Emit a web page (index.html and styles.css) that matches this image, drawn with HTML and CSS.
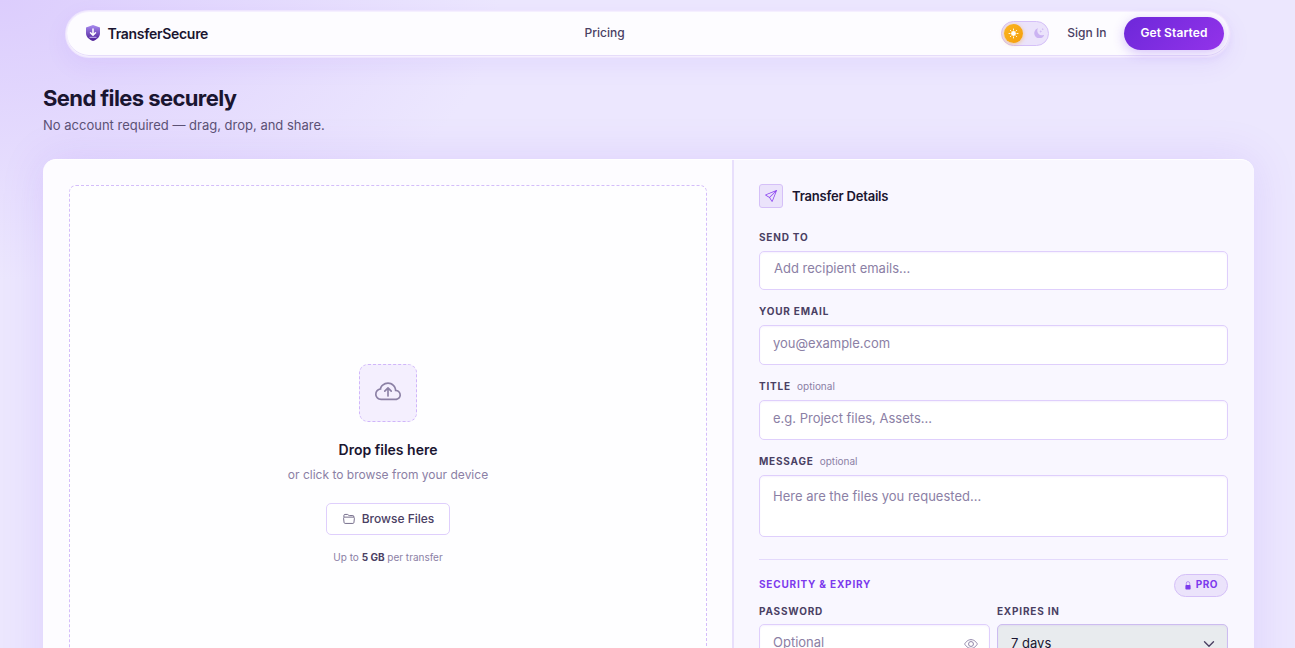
FILE: index.html
```html
<!DOCTYPE html>
<html lang="en">
<head>
<meta charset="utf-8">
<meta name="viewport" content="width=device-width, initial-scale=1">
<title>TransferSecure</title>
<link rel="stylesheet" href="styles.css">
</head>
<body>
<header class="nav">
  <a class="brand" href="#">
    <svg width="16" height="18" viewBox="0 0 16 18" aria-hidden="true">
      <defs><linearGradient id="shield" x1="0" y1="0" x2="0" y2="1"><stop offset="0" stop-color="#a88bf0"/><stop offset="1" stop-color="#4c1d95"/></linearGradient></defs>
      <path d="M8 1 15 3.500V9c0 4-3 6.500-7 8-4-1.500-7-4-7-8V3.500z" fill="url(#shield)"/>
      <path d="M8 5v6M5.500 8.700 8 11.200l2.500-2.500" fill="none" stroke="#fff" stroke-width="1.500" stroke-linecap="round" stroke-linejoin="round"/>
      <path d="M4.500 13.300h7" stroke="#c9b4f5" stroke-width="1"/>
    </svg>
    <span>TransferSecure</span>
  </a>
  <nav class="links"><a href="#">Pricing</a></nav>
  <div class="actions">
    <button class="theme" type="button" aria-label="Toggle theme">
      <span class="knob"><svg width="11" height="11" viewBox="0 0 10 10"><circle cx="5" cy="5" r="2.200" fill="#fff"/><path d="M5 .9v1M5 8.100v1M.9 5h1M8.100 5h1M2.100 2.100l.6.600M7.300 7.300l.6.600M2.100 7.900l.6-.6M7.300 2.700l.6-.6" stroke="#fff" stroke-width=".8" stroke-linecap="round"/></svg></span>
      <svg width="10" height="10" viewBox="0 0 16 16" fill="#cbb3f2"><path d="M6 .3a.8.800 0 0 1 .1.800 7.200 7.200 0 0 0 9 10 .8.800 0 0 1 .8 1.200A8.300 8.300 0 1 1 6 .3z"/><path d="m10.800 3.200.6 1.700 1.700.6-1.700.6-.6 1.700-.6-1.700-1.700-.6 1.700-.6zM14 0l.5 1.300 1.300.5-1.300.500L14 3.600l-.5-1.300-1.300-.5 1.300-.5z"/></svg>
    </button>
    <a class="signin" href="#">Sign In</a>
    <a class="cta" href="#">Get Started</a>
  </div>
</header>
<main class="page">
  <h1>Send files securely</h1>
  <p class="lead">No account required — drag, drop, and share.</p>
  <div class="card">
    <section class="upload">
      <div class="drop">
        <div class="cloud"><svg width="26" height="26" viewBox="0 0 16 16" fill="#8b80a5" aria-hidden="true"><path fill-rule="evenodd" d="M7.646 5.146a.5.5 0 0 1 .708 0l2 2a.5.5 0 0 1-.708.708L8.500 6.707V10.500a.5.5 0 0 1-1 0V6.707L6.354 7.854a.5.5 0 1 1-.708-.708z"/><path d="M4.406 3.342A5.530 5.530 0 0 1 8 2c2.690 0 4.923 2 5.166 4.579C14.758 6.804 16 8.137 16 9.773 16 11.569 14.502 13 12.687 13H3.781C1.708 13 0 11.366 0 9.318c0-1.763 1.266-3.223 2.942-3.593.143-.863.698-1.723 1.464-2.383m.653.757c-.757.653-1.153 1.440-1.153 2.056v.448l-.445.049C2.064 6.805 1 7.952 1 9.318 1 10.785 2.230 12 3.781 12h8.906C13.980 12 15 10.988 15 9.773c0-1.216-1.020-2.228-2.313-2.228h-.5v-.5C12.188 4.825 10.328 3 8 3a4.530 4.530 0 0 0-2.941 1.100z"/></svg></div>
        <h2>Drop files here</h2>
        <p class="hint">or click to browse from your device</p>
        <button class="browse" type="button"><svg width="12" height="12" viewBox="0 0 16 16" fill="none" stroke="#5b5175" stroke-width="1.100" stroke-linejoin="round" aria-hidden="true"><path d="M1.200 5.500V3.300c0-.8.600-1.400 1.400-1.400h3c.5 0 .9.200 1.200.5l.7.600c.3.300.6.400 1 .4h4.600c.9 0 1.500.7 1.400 1.600V5.500M2.200 5.500h11.600c.9 0 1.500.7 1.400 1.500l-.6 5.600c-.1.800-.7 1.300-1.400 1.300H2.800c-.7 0-1.300-.5-1.400-1.300L.8 7c-.1-.8.500-1.500 1.400-1.500z"/></svg><span>Browse Files</span></button>
        <p class="limit">Up to <strong>5 GB</strong> per transfer</p>
      </div>
    </section>
    <form class="details">
      <div class="title"><span class="badge"><svg width="12" height="12" viewBox="0 0 16 16" fill="#8b45f0" aria-hidden="true"><path d="M15.854.146a.5.5 0 0 1 .11.540l-5.819 14.547a.75.75 0 0 1-1.329.124l-3.178-4.995L.643 7.184a.75.75 0 0 1 .124-1.330L15.314.037a.5.5 0 0 1 .54.110ZM6.636 10.070l2.761 4.338L14.130 2.576zm6.787-8.201L1.591 6.602l4.339 2.760z"/></svg></span><h2>Transfer Details</h2></div>
      <div class="field"><label for="to">Send to</label><input class="first" id="to" type="text" placeholder="Add recipient emails..."></div>
      <div class="field"><label for="mail">Your email</label><input id="mail" type="email" placeholder="you@example.com"></div>
      <div class="field"><label for="subject">Title <small>optional</small></label><input id="subject" type="text" placeholder="e.g. Project files, Assets..."></div>
      <div class="field"><label for="message">Message <small>optional</small></label><textarea id="message" placeholder="Here are the files you requested..."></textarea></div>
      <div class="security">
        <h3>Security &amp; Expiry</h3>
        <span class="pro"><svg width="8" height="9" viewBox="0 0 8 9" aria-hidden="true"><path d="M2.300 4V2.300a1.700 1.700 0 0 1 3.400 0V4" fill="none" stroke="#a67cf3" stroke-width=".8"/><rect x="1.400" y="4" width="5.200" height="4.500" rx=".8" fill="#7c3aed"/></svg><span>PRO</span></span>
      </div>
      <div class="pair">
        <div class="field"><label for="pass">Password</label><div class="control"><input id="pass" type="password" placeholder="Optional"><button class="eye" type="button" aria-label="Show password"><svg width="14" height="14" viewBox="0 0 16 16" fill="none" stroke="#8b80a5" stroke-width="1.100"><path d="M.7 8S3.300 3 8 3s7.300 5 7.300 5-2.600 5-7.300 5S.7 8 .7 8z"/><circle cx="8" cy="8" r="2.800"/></svg></button></div></div>
        <div class="field"><label for="expiry">Expires in</label><div class="control"><select id="expiry"><option>7 days</option><option>14 days</option><option>30 days</option></select><svg class="chevron" width="12" height="12" viewBox="0 0 16 16" fill="none" stroke="#4a4063" stroke-width="1.800" stroke-linecap="round" stroke-linejoin="round" aria-hidden="true"><path d="m2 5 6 6 6-6"/></svg></div></div>
      </div>
    </form>
  </div>
</main>
</body>
</html>
```
FILE: styles.css
```css
* { box-sizing: border-box; }
body {
  margin: 0;
  height: 100vh;
  overflow: hidden;
  font-family: Inter, "Liberation Sans", sans-serif;
  color: #1a1530;
  background:
    radial-gradient(ellipse 500px 280px at 0 0, #dccdfd 0%, rgba(220, 205, 253, 0) 100%),
    #ece7fe;
}
h1, h2, h3, p { margin: 0; }
a { color: inherit; text-decoration: none; }
button, input, select, textarea { font: inherit; }
svg { display: block; flex: none; }

.nav {
  display: flex;
  align-items: center;
  justify-content: space-between;
  height: 46px;
  width: calc(100% - 131px);
  margin: 11px auto 0;
  padding: 0 5px 2px 18px;
  border: 1px solid #f5efff;
  border-radius: 23px;
  background: #fdfcff;
  box-shadow: inset 0 -1px 0 #e6dcfa, 0 0 0 1px #eee5fe, 0 8px 24px rgba(124, 58, 237, .08);
}
.brand { display: flex; align-items: center; gap: 7px; font-size: 14px; font-weight: 600; letter-spacing: -.3px; }
.links, .signin { padding-bottom: 1px; font-size: 12px; font-weight: 500; color: #4a4063; }
.actions { display: flex; align-items: center; justify-content: flex-end; }
.theme {
  display: flex;
  align-items: center;
  justify-content: space-between;
  width: 48px;
  height: 25px;
  padding: 0 4px 0 2px;
  border: 1px solid #d5c0f8;
  border-radius: 13px;
  background: #ebe3fb;
}
.knob {
  display: grid;
  place-items: center;
  width: 19px;
  height: 19px;
  border-radius: 50%;
  background: linear-gradient(135deg, #fbb520, #f59e0b);
  box-shadow: 0 1px 4px rgba(245, 158, 11, .5);
}
.signin { margin: 0 18px; }
.cta {
  padding: 0 16px 1px;
  border-radius: 17px;
  font-size: 12px;
  font-weight: 600;
  line-height: 32px;
  letter-spacing: .1px;
  color: #fff;
  background: linear-gradient(135deg, #6d28d9, #9333ea);
  box-shadow: 0 3px 12px rgba(124, 58, 237, .3);
}

.page { padding: 26px 41px 0 43px; }
h1 { font-size: 22px; line-height: 30px; font-weight: 700; letter-spacing: -.6px; }
.lead { margin-top: 3px; font-size: 13px; line-height: 18px; color: #5b5175; }
.card {
  display: grid;
  grid-template-columns: 689fr 522fr;
  margin-top: 25px;
  border-top: 1px solid #fff;
  border-radius: 13px;
  overflow: hidden;
  background: #fdfcff;
  box-shadow: 0 0 44px rgba(124, 58, 237, .13);
}
.upload { display: flex; padding: 25px 25px 25px 26px; }
.drop {
  flex: 1;
  display: flex;
  flex-direction: column;
  align-items: center;
  padding-top: 178px;
  border: 1px dashed #d4bdfa;
  border-radius: 7px;
  background: #fefeff;
}
.cloud {
  display: grid;
  place-items: center;
  width: 58px;
  height: 58px;
  padding-bottom: 3px;
  border: 1px dashed #d0b6fa;
  border-radius: 9px;
  background: #f4effe;
}
.drop h2 { margin-top: 18px; font-size: 14px; line-height: 20px; font-weight: 600; }
.hint { margin-top: 6px; font-size: 12px; line-height: 18px; color: #8b80a5; }
.browse {
  display: flex;
  align-items: center;
  gap: 7px;
  height: 32px;
  margin-top: 19px;
  padding: 0 15px 0 16px;
  border: 1px solid #dfcffc;
  border-radius: 5px;
  background: #fff;
  color: #4a4063;
  font-size: 12px;
  font-weight: 500;
}
.browse span { padding-bottom: 2px; }
.limit { margin-top: 14px; font-size: 10px; line-height: 16px; color: #8b80a5; }
.limit strong { color: #4a4063; }

.details { padding: 24px 26px 25px 25px; border-left: 2px solid #e8dffc; background: #f9f7ff; }
.title { display: flex; align-items: center; gap: 9px; margin-bottom: 21px; }
.title h2 { font-size: 13px; line-height: 20px; font-weight: 600; letter-spacing: -.2px; }
.badge {
  display: grid;
  place-items: center;
  width: 24px;
  height: 24px;
  padding-bottom: 1px;
  border: 1px solid #d5c0f8;
  border-radius: 3px;
  background: #ebe3fb;
}
.field { display: flex; flex-direction: column; margin-bottom: 13px; }
label { margin-bottom: 6px; font-size: 10px; line-height: 16px; font-weight: 700; letter-spacing: .8px; text-transform: uppercase; color: #4a4063; }
label small { margin-left: 3px; font-size: 10px; font-weight: 400; letter-spacing: 0; text-transform: none; color: #8b80a5; }
input, select, textarea {
  display: block;
  width: 100%;
  height: 40px;
  margin: 0;
  padding: 0 13px 4px;
  border: 1px solid #dfcffc;
  border-radius: 5px;
  outline: 0;
  background: #fff;
  box-shadow: inset 0 1px 2px rgba(124, 58, 237, .07);
  color: #1a1530;
  font-size: 13px;
}
.first { height: 39px; padding: 0 14px 5px; }
textarea { height: 62px; padding: 11px 13px; line-height: 18px; resize: none; }
input::placeholder, textarea::placeholder { color: #8b80a5; opacity: 1; }
.security {
  display: flex;
  align-items: center;
  justify-content: space-between;
  margin-top: 22px;
  padding-top: 14px;
  border-top: 1px solid #e4dafc;
}
.security h3 { padding-bottom: 3px; font-size: 10px; line-height: 16px; font-weight: 700; letter-spacing: .8px; text-transform: uppercase; color: #7c3aed; }
.pro {
  display: flex;
  align-items: center;
  gap: 4px;
  height: 23px;
  padding: 0 9px;
  border: 1px solid #d5c0f8;
  border-radius: 12px;
  background: #ebe3fb;
  color: #7c3aed;
  font-size: 10px;
  font-weight: 700;
  letter-spacing: .5px;
}
.pro span { padding-bottom: 3px; }
.pair { display: grid; grid-template-columns: 1fr 1fr; gap: 7px; margin-top: 6px; }
.pair label { margin-bottom: 5px; }
.control { display: grid; align-items: center; }
.control > * { grid-area: 1 / 1; }
.eye { justify-self: end; margin-right: 12px; padding: 0; border: 0; background: none; }
select { appearance: none; padding-bottom: 3px; border-color: #cdbcf0; background: #e8ebee; }
.chevron { justify-self: end; margin-right: 13px; pointer-events: none; }
```
